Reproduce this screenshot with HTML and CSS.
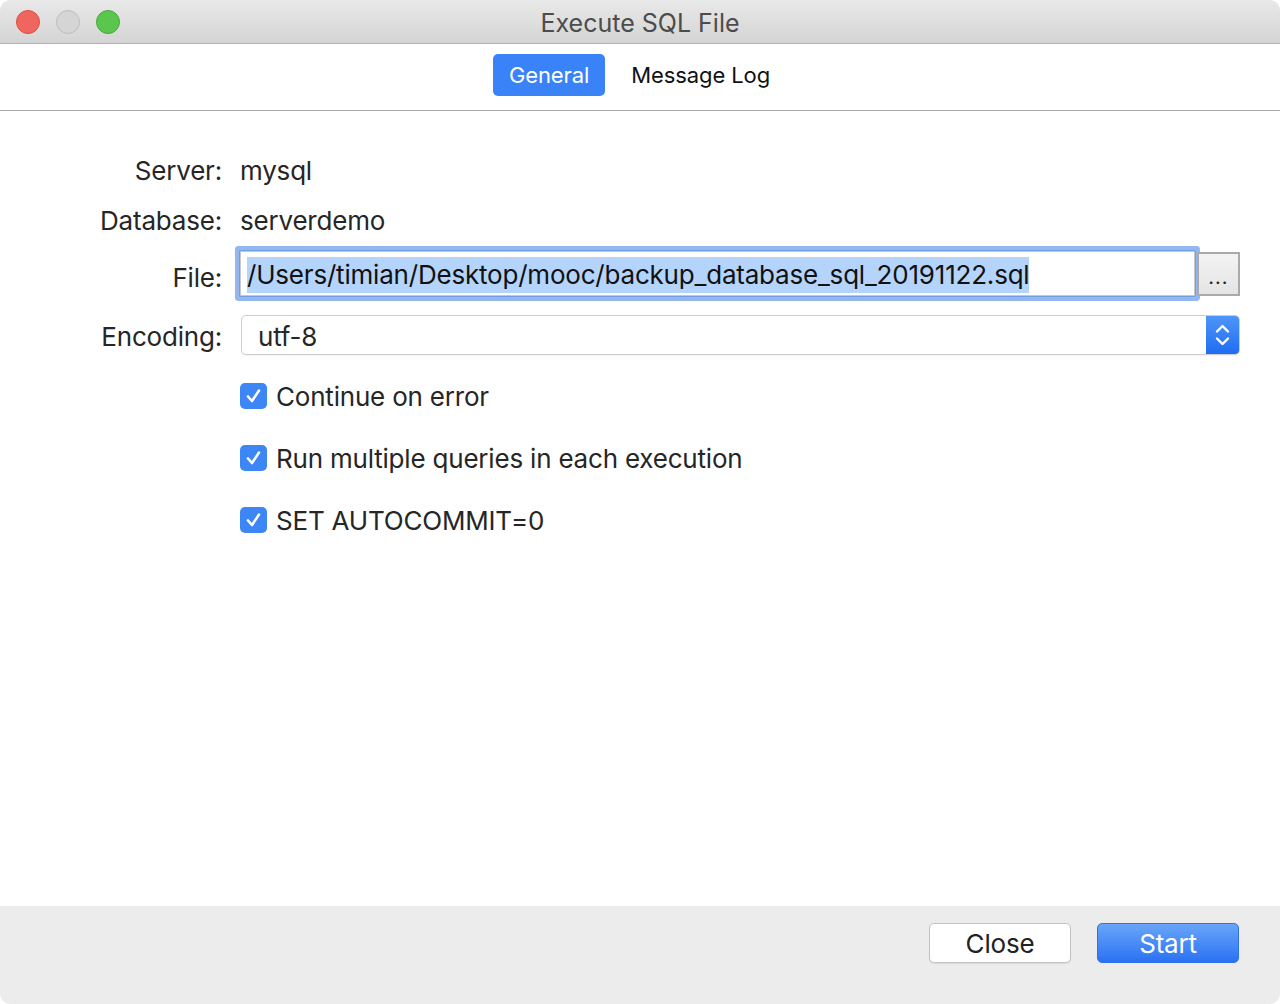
FILE: index.html
```html
<!DOCTYPE html>
<html>
<head>
<meta charset="utf-8">
<link rel="stylesheet" href="styles.css">
</head>
<body>
<div class="window">
  <div class="titlebar">
    <div class="lights">
      <span class="light red"></span>
      <span class="light gray"></span>
      <span class="light green"></span>
    </div>
    <div class="title">Execute SQL File</div>
  </div>
  <div class="tabs">
    <span class="tab active">General</span>
    <span class="tab">Message Log</span>
  </div>
  <div class="content">
    <div class="row row-text">
      <div class="label">Server:</div>
      <div class="value">mysql</div>
    </div>
    <div class="row row-text">
      <div class="label">Database:</div>
      <div class="value">serverdemo</div>
    </div>
    <div class="row row-file">
      <div class="label">File:</div>
      <div class="value file-wrap">
        <div class="field focused"><span class="sel">/Users/timian/Desktop/mooc/backup_database_sql_20191122.sql</span></div>
        <div class="browse">...</div>
      </div>
    </div>
    <div class="row row-select">
      <div class="label">Encoding:</div>
      <div class="value">
        <div class="select">
          <span class="select-text">utf-8</span>
          <span class="stepper">
            <svg width="33" height="40" viewBox="0 0 33 40"><path d="M11 16.5 L16.5 11 L22 16.5" fill="none" stroke="#fff" stroke-width="2.4" stroke-linecap="round" stroke-linejoin="round"/><path d="M11 23.5 L16.5 29 L22 23.5" fill="none" stroke="#fff" stroke-width="2.4" stroke-linecap="round" stroke-linejoin="round"/></svg>
          </span>
        </div>
      </div>
    </div>
    <div class="row row-check first-check">
      <div class="label"></div>
      <div class="value check-line"><span class="checkbox"><svg width="27" height="26" viewBox="0 0 27 26"><path d="M8 13.5 L12 18 L19 7.5" fill="none" stroke="#fff" stroke-width="2.6" stroke-linecap="round" stroke-linejoin="round"/></svg></span>Continue on error</div>
    </div>
    <div class="row row-check">
      <div class="label"></div>
      <div class="value check-line"><span class="checkbox"><svg width="27" height="26" viewBox="0 0 27 26"><path d="M8 13.5 L12 18 L19 7.5" fill="none" stroke="#fff" stroke-width="2.6" stroke-linecap="round" stroke-linejoin="round"/></svg></span>Run multiple queries in each execution</div>
    </div>
    <div class="row row-check">
      <div class="label"></div>
      <div class="value check-line"><span class="checkbox"><svg width="27" height="26" viewBox="0 0 27 26"><path d="M8 13.5 L12 18 L19 7.5" fill="none" stroke="#fff" stroke-width="2.6" stroke-linecap="round" stroke-linejoin="round"/></svg></span>SET AUTOCOMMIT=0</div>
    </div>
  </div>
  <div class="footer">
    <span class="btn btn-close">Close</span>
    <span class="btn btn-start">Start</span>
  </div>
</div>
</body>
</html>
```

FILE: styles.css
```css
html, body {
  margin: 0;
  padding: 0;
  background: #ffffff;
}
body {
  font-family: "Inter", "Liberation Sans", sans-serif;
  color: #262626;
  width: 1280px;
  height: 1004px;
  overflow: hidden;
  letter-spacing: -0.2px;
}
.window {
  width: 1280px;
  height: 1004px;
  display: flex;
  flex-direction: column;
  background: #ffffff;
  border-radius: 10px;
  overflow: hidden;
}
.titlebar {
  height: 43px;
  flex: none;
  position: relative;
  display: flex;
  align-items: center;
  justify-content: center;
  background: linear-gradient(#e9e9e9, #d4d4d4);
  border-bottom: 1px solid #b1b1b1;
}
.lights {
  position: absolute;
  left: 16px;
  top: 10px;
  display: flex;
  gap: 16px;
}
.light {
  width: 24px;
  height: 24px;
  border-radius: 50%;
  box-sizing: border-box;
}
.red { background: #f0655e; border: 1px solid #de4d46; }
.gray { background: #d5d5d5; border: 1px solid #bdbdbd; }
.green { background: #5bc64e; border: 1px solid #44a93a; }
.title {
  font-size: 25px;
  color: #4c4c4c;
  letter-spacing: 0;
  padding-top: 2px;
}
.tabs {
  height: 67px;
  flex: none;
  display: flex;
  justify-content: center;
  align-items: flex-start;
  padding-top: 10px;
  padding-right: 2px;
  box-sizing: border-box;
  gap: 11px;
  border-bottom: 1px solid #a9a9a9;
}
.tab {
  font-size: 22px;
  line-height: 42px;
  height: 42px;
  color: #111;
  padding: 0 15px;
  letter-spacing: -0.1px;
}
.tab.active {
  background: #3a82f7;
  color: #fff;
  border-radius: 5px;
  padding: 0 16px;
}
.content {
  flex: 1;
  padding-top: 34px;
  padding-right: 40px;
}
.row {
  display: flex;
  align-items: center;
}
.label {
  width: 222px;
  flex: none;
  text-align: right;
  font-size: 26px;
  color: #262626;
}
.value {
  margin-left: 18px;
  flex: 1;
  font-size: 26px;
  color: #262626;
}
.row-text {
  height: 50px;
}
.row-file {
  height: 54px;
  margin-top: 1px;
}
.row-file .label {
  padding-top: 8px;
}
.file-wrap {
  display: flex;
  align-items: flex-start;
  height: 54px;
  padding-top: 5px;
  box-sizing: border-box;
}
.field {
  flex: 1;
  height: 45px;
  box-sizing: border-box;
  border: 1px solid #c9c9c9;
  background: #fff;
  padding: 5px 6px 0;
  white-space: nowrap;
  overflow: hidden;
  color: #111;
}
.field.focused {
  box-shadow: 0 0 0 1px #6f9ee9, 0 0 0 5px #94b7f0;
  border-radius: 1px;
}
.sel {
  background: #b4d4fb;
  display: inline-block;
  line-height: 36px;
  height: 36px;
}
.browse {
  width: 43px;
  height: 44px;
  margin-left: 2px;
  margin-top: 1px;
  box-sizing: border-box;
  border: 2px solid #aaaaaa;
  background: linear-gradient(#f3f3f3, #e4e4e4);
  font-size: 20px;
  text-align: center;
  line-height: 46px;
  color: #222;
  letter-spacing: 1px;
}
.row-select {
  height: 40px;
  margin-top: 15px;
}
.row-select .label {
  padding-top: 3px;
}
.row-select .value {
  margin-left: 19px;
}
.select {
  height: 40px;
  box-sizing: border-box;
  border: 1px solid #cdcdcd;
  border-radius: 5px;
  display: flex;
  align-items: center;
  justify-content: space-between;
  overflow: hidden;
  box-shadow: 0 1px 1px rgba(0,0,0,0.05);
}
.select-text {
  padding-left: 16px;
  padding-top: 3px;
  font-size: 26px;
  color: #262626;
}
.stepper {
  width: 33px;
  height: 40px;
  flex: none;
  background: linear-gradient(#4f96f8, #1f6cf3);
  display: flex;
}
.row-check {
  height: 62px;
}
.first-check {
  margin-top: 10px;
}
.check-line {
  display: flex;
  align-items: center;
  font-size: 26px;
  color: #262626;
}
.checkbox {
  width: 27px;
  height: 26px;
  border-radius: 5px;
  background: #3d86f5;
  display: inline-flex;
  margin-right: 9px;
}
.footer {
  height: 98px;
  flex: none;
  background: #ececec;
  display: flex;
  justify-content: flex-end;
  align-items: flex-start;
  padding-top: 17px;
  padding-right: 41px;
  box-sizing: border-box;
  gap: 26px;
}
.btn {
  width: 142px;
  height: 40px;
  box-sizing: border-box;
  border-radius: 5px;
  text-align: center;
  font-size: 26px;
  line-height: 39px;
}
.btn-close {
  background: #fff;
  border: 1px solid #c3c3c3;
  color: #222;
  box-shadow: 0 1px 1px rgba(0,0,0,0.08);
}
.btn-start {
  background: linear-gradient(#6aa5f9, #2a72f4);
  border: 1px solid #2e71e8;
  color: #fff;
}
```
